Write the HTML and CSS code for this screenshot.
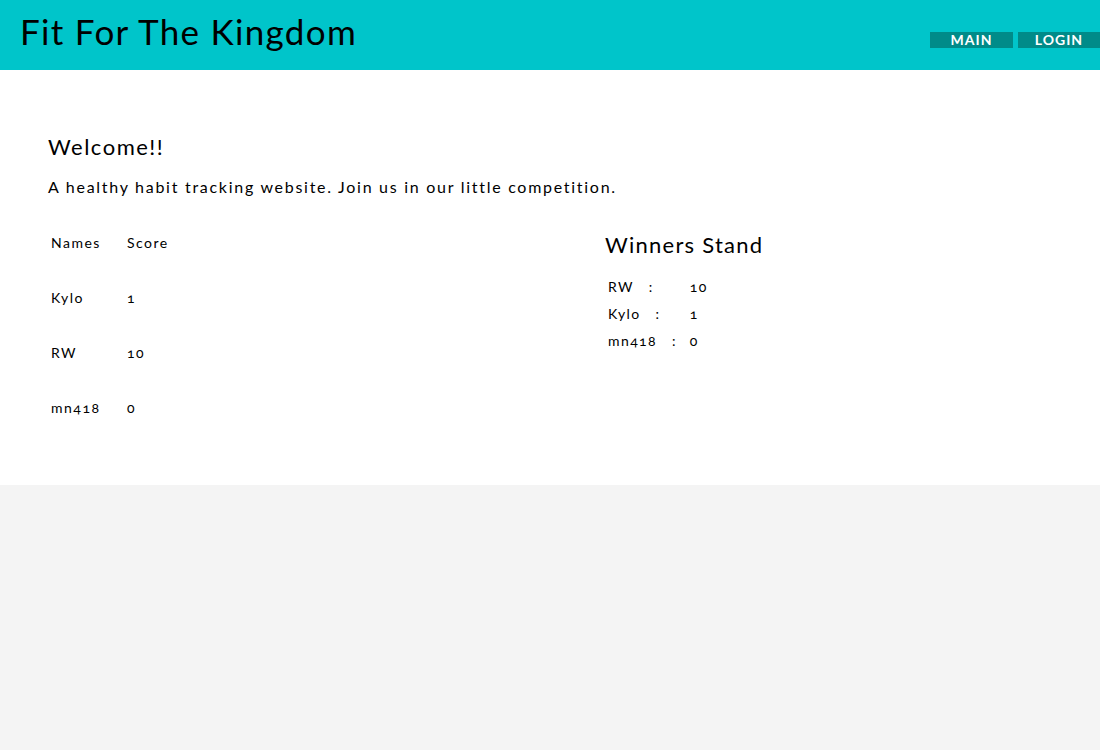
FILE: index.html
```html
<!DOCTYPE html>
<html>
<head>
<meta charset="utf-8">
<title>Fit For The Kingdom</title>
<link rel="stylesheet" href="styles.css">
</head>
<body>
<header class="topbar">
  <h1 class="brand">Fit For The Kingdom</h1>
  <nav class="nav">
    <a class="nav-btn nav-main" href="#">MAIN</a>
    <a class="nav-btn nav-login" href="#">LOGIN</a>
  </nav>
</header>
<main class="content">
  <h2 class="welcome">Welcome!!</h2>
  <p class="intro">A healthy habit tracking website. Join us in our little competition.</p>
  <div class="columns">
    <table class="scores">
      <tr><th class="col-name">Names</th><th>Score</th></tr>
      <tr><td class="col-name">Kylo</td><td>1</td></tr>
      <tr><td class="col-name">RW</td><td>10</td></tr>
      <tr><td class="col-name">mn418</td><td>0</td></tr>
    </table>
    <section class="winners">
      <h3 class="winners-title">Winners Stand</h3>
      <table class="stand">
        <tr><td>RW&nbsp;&nbsp; :</td><td>10</td></tr>
        <tr><td>Kylo&nbsp;&nbsp; :</td><td>1</td></tr>
        <tr><td>mn418&nbsp;&nbsp; :</td><td>0</td></tr>
      </table>
    </section>
  </div>
</main>
</body>
</html>
```

FILE: styles.css
```css
html, body {
  margin: 0;
  padding: 0;
}
body {
  background: #f4f4f4;
  font-family: "Lato", "Open Sans", sans-serif;
  color: #000;
  font-variant-numeric: oldstyle-nums;
}
.topbar {
  background: #00c5ca;
  height: 70px;
  display: flex;
  justify-content: space-between;
  align-items: flex-start;
}
.brand {
  margin: 0;
  padding: 11px 0 0 20px;
  font-size: 35px;
  font-weight: 400;
  line-height: 40px;
  letter-spacing: 1.3px;
}
.nav {
  display: flex;
  gap: 5px;
  padding-top: 32px;
}
.nav-btn {
  display: block;
  background: #008b89;
  color: #fff;
  text-decoration: none;
  font-size: 14px;
  font-weight: 700;
  letter-spacing: 1px;
  line-height: 16px;
  height: 16px;
  text-align: center;
}
.nav-main { width: 83px; }
.nav-login { width: 82px; }
.content {
  background: #fff;
  padding: 62px 48px 0;
  height: 353px;
}
.welcome {
  margin: 0;
  font-size: 22px;
  font-weight: 400;
  line-height: 30px;
  letter-spacing: 1.5px;
}
.intro {
  margin: 13px 0 0;
  font-size: 16px;
  line-height: 24px;
  letter-spacing: 1.72px;
}
.columns {
  display: grid;
  grid-template-columns: 557px 1fr;
  margin-top: 15px;
}
.scores {
  justify-self: start;
  align-self: start;
  border-collapse: separate;
  border-spacing: 2px;
}
.scores th, .scores td {
  font-size: 14px;
  font-weight: 400;
  letter-spacing: 1.5px;
  text-align: left;
  line-height: 53px;
  padding: 0 26px 0 1px;
  vertical-align: top;
}
.scores .col-name {
  width: 73px;
  padding-right: 0;
}
.winners-title {
  margin: 16px 0 0;
  font-size: 22px;
  font-weight: 400;
  line-height: 30px;
  letter-spacing: 1.25px;
}
.stand {
  margin-top: 12px;
  border-collapse: separate;
  border-spacing: 2px;
}
.stand td {
  font-size: 14px;
  letter-spacing: 1.4px;
  padding: 1px 10px 1px 1px;
  height: 23px;
}
```
